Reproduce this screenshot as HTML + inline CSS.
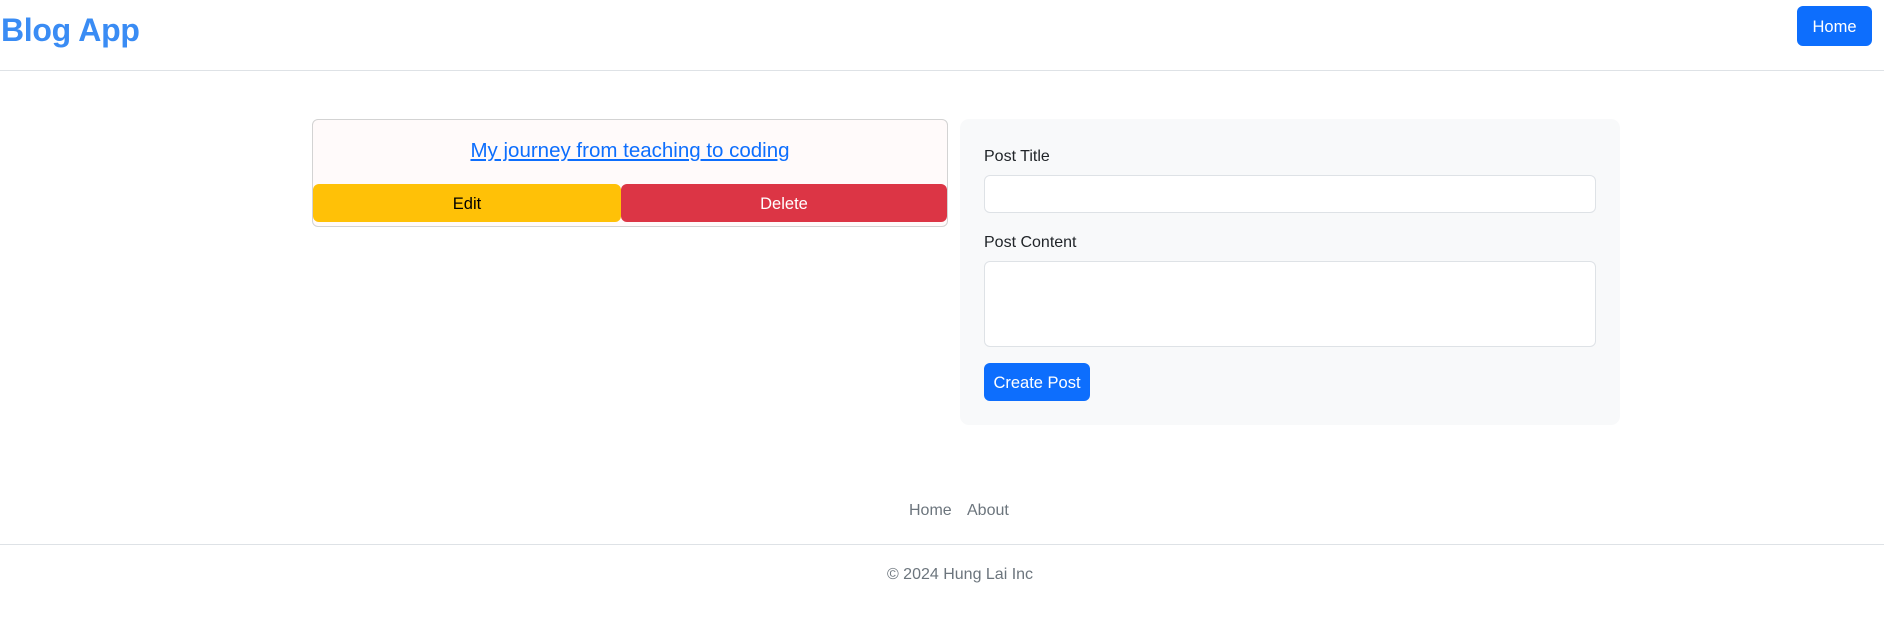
<!DOCTYPE html>
<html><head><meta charset="utf-8"><style>
*{box-sizing:border-box;margin:0;padding:0}
body{width:1884px;height:625px;background:#fff;font-family:"Liberation Sans",sans-serif;color:#212529;position:relative;overflow:hidden}
.abs{position:absolute}
.brand{left:1px;top:12px;font-size:32px;font-weight:bold;color:#3a8cf4;letter-spacing:-0.3px}
.hline{left:0;width:1884px;height:1px;background:#dee2e6}
.btn{position:absolute;display:flex;align-items:center;justify-content:center;font-size:16.5px;border-radius:6px;padding-top:2px}
.card{left:312px;top:119px;width:636px;height:108px;border:1px solid #d3d3d3;border-radius:6px;background:#fffafa}
.title{left:312px;width:636px;top:139px;text-align:center;font-size:20.5px;color:#0d6efd;text-decoration:underline}
.panel{left:960px;top:119px;width:660px;height:306px;background:#f8f9fa;border-radius:9px}
.lbl{font-size:16px;color:#212529}
.inp{position:absolute;background:#fff;border:1px solid #dee2e6;border-radius:6px}
.foot{font-size:16px;color:#6c757d}
</style></head><body>
<div class="abs brand">Blog App</div>
<div class="btn" style="left:1797px;top:6px;width:75px;height:40px;background:#0d6efd;color:#fff">Home</div>
<div class="abs hline" style="top:70px"></div>

<div class="abs card"></div>
<div class="abs title">My journey from teaching to coding</div>
<div class="btn" style="left:313px;top:184px;width:308px;height:38px;background:#ffc107;color:#000">Edit</div>
<div class="btn" style="left:621px;top:184px;width:326px;height:38px;background:#dc3545;color:#fff">Delete</div>

<div class="abs panel"></div>
<div class="abs lbl" style="left:984px;top:148px">Post Title</div>
<div class="inp" style="left:984px;top:175px;width:612px;height:38px"></div>
<div class="abs lbl" style="left:984px;top:234px">Post Content</div>
<div class="inp" style="left:984px;top:261px;width:612px;height:86px"></div>
<div class="btn" style="left:984px;top:363px;width:106px;height:38px;background:#0d6efd;color:#fff">Create Post</div>

<div class="abs foot" style="left:909px;top:502px">Home</div>
<div class="abs foot" style="left:967px;top:502px">About</div>
<div class="abs hline" style="top:544px"></div>
<div class="abs foot" style="left:0;width:1884px;top:566px;text-align:center;padding-left:36px">© 2024 Hung Lai Inc</div>
</body></html>
